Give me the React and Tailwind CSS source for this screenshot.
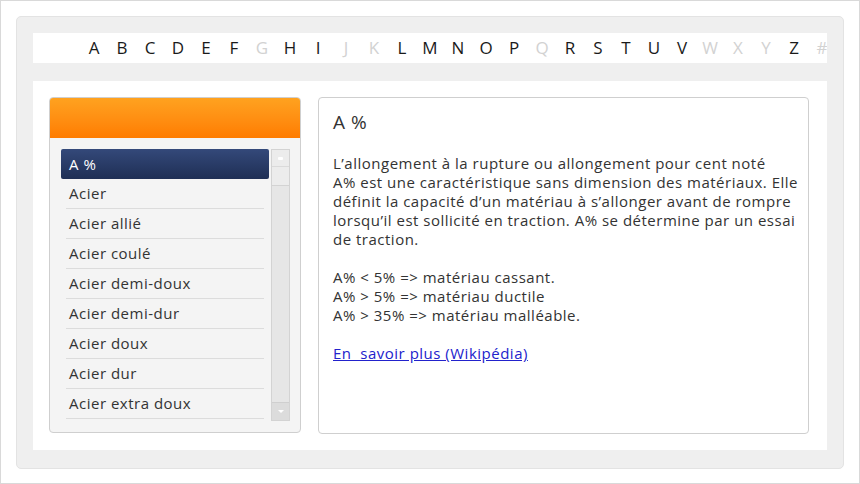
const letters = [
  ['A', 1], ['B', 1], ['C', 1], ['D', 1], ['E', 1], ['F', 1], ['G', 0], ['H', 1], ['I', 1],
  ['J', 0], ['K', 0], ['L', 1], ['M', 1], ['N', 1], ['O', 1], ['P', 1], ['Q', 0], ['R', 1],
  ['S', 1], ['T', 1], ['U', 1], ['V', 1], ['W', 0], ['X', 0], ['Y', 0], ['Z', 1], ['#', 0],
]

const items = [
  'Acier',
  'Acier allié',
  'Acier coulé',
  'Acier demi-doux',
  'Acier demi-dur',
  'Acier doux',
  'Acier dur',
  'Acier extra doux',
]

export default function App() {
  return (
    <div className="w-[860px] h-[484px] bg-white border border-[#d9d9d9] p-[15px] font-['Open_Sans',sans-serif] text-[#333]">
      <div className="h-[453px] bg-[#efefef] border border-[#e3e3e3] rounded-[5px] px-[16px] pt-[16px]">
        {/* alphabet bar */}
        <div className="h-[30px] bg-white flex items-center pl-[47px] overflow-hidden">
          {letters.map(([l, on]) => (
            <span
              key={l}
              className={`w-[28px] shrink-0 text-center text-[17px] ${on ? 'text-[#1a1a1a]' : 'text-[#d2d2d2]'}`}
            >
              {l}
            </span>
          ))}
        </div>

        {/* content */}
        <div className="mt-[18px] h-[369px] bg-white flex gap-[17px] px-[16px] pt-[16px]">
          {/* left list panel */}
          <div className="w-[252px] h-[336px] rounded-[4px] border border-[#cfcfcf] bg-[#f4f4f4] flex flex-col overflow-hidden">
            <div className="h-[40px] bg-gradient-to-b from-[#ffa21f] to-[#ff7c00]" />
            <div className="flex pl-[11px] pt-[11px] gap-[2px]">
              <div className="w-[208px] text-[15px] tracking-[0.5px]">
                <div className="h-[30px] bg-gradient-to-b from-[#34497a] to-[#1f2f55] rounded-[2px] flex items-center pl-[8px] text-white">
                  A %
                </div>
                {items.map((it) => (
                  <div key={it} className="h-[30px] mx-[5px] border-b border-[#dcdcdc] flex items-center pl-[3px] text-[#333]">
                    {it}
                  </div>
                ))}
              </div>
              <div className="w-[19px] h-[272px] bg-[#e6e6e6] border border-[#d3d3d3] flex flex-col justify-between">
                <div className="h-[36px] bg-[#ececec] border-b border-[#d3d3d3] flex flex-col">
                  <div className="h-[17px] flex items-center justify-center border-b border-[#dadada]">
                    <span className="w-[5px] h-[3px] bg-white rounded-[1px]" />
                  </div>
                </div>
                <div className="h-[18px] bg-[#dcdcdc] border-t border-[#cfcfcf] flex items-center justify-center">
                  <span className="w-0 h-0 border-l-[3px] border-r-[3px] border-t-[3px] border-l-transparent border-r-transparent border-t-white" />
                </div>
              </div>
            </div>
          </div>

          {/* right definition panel */}
          <div className="w-[491px] h-[337px] rounded-[4px] border border-[#cfcfcf] bg-white pl-[14px] pr-[6px] pt-[12px] text-[#333] text-[15px] leading-[19px] tracking-[0.5px]">
            <h2 className="text-[19px] leading-[24px]">A %</h2>
            <p className="mt-[20px]">
              L’allongement à la rupture ou allongement pour cent noté<br />
              A% est une caractéristique sans dimension des matériaux. Elle<br />
              définit la capacité d’un matériau à s’allonger avant de rompre<br />
              lorsqu’il est sollicité en traction. A% se détermine par un essai<br />
              de traction.
            </p>
            <p className="mt-[19px]">
              A% &lt; 5% =&gt; matériau cassant.<br />
              A% &gt; 5% =&gt; matériau ductile<br />
              A% &gt; 35% =&gt; matériau malléable.
            </p>
            <a href="#" className="block mt-[19px] text-[#2222cc] underline">
              En&nbsp; savoir plus (Wikipédia)
            </a>
          </div>
        </div>
      </div>
    </div>
  )
}
